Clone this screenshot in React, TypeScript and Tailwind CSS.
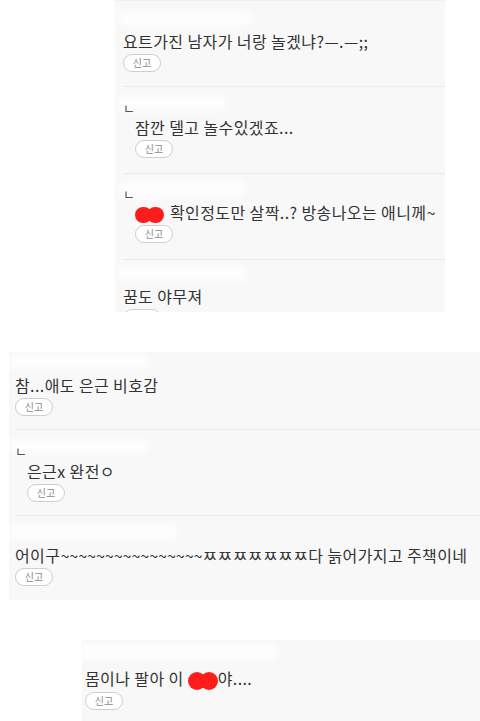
import React from "react";

interface Comment {
  text: React.ReactNode;
  reply?: boolean;
  nick: number;
  pt: string;
  gap: string;
  pb: string;
}

const Censor = ({ big }: { big?: boolean }) => (
  <span className="inline-flex items-center align-middle mr-[6px]">
    <span className={big ? "w-[18px] h-[18px] rounded-full bg-[#ff1c1c]" : "w-[17px] h-[16px] rounded-full bg-[#ff1c1c]"} />
    <span className={big ? "w-[18px] h-[18px] rounded-full bg-[#ff1c1c] -ml-[6px]" : "w-[17px] h-[16px] rounded-full bg-[#ff1c1c] -ml-[5px]"} />
  </span>
);

const ReportButton = () => (
  <div className="h-[18px] w-[38px] rounded-full border border-[#cfcfcf] bg-white flex items-center justify-center text-[10px] text-[#8a8a8a] leading-none">
    신고
  </div>
);

const CommentRow = ({ c, last }: { c: Comment; last?: boolean }) => (
  <div className={`${c.pt} ${c.pb} ${last ? "" : "border-b border-[#ececec]"}`}>
    <div className="relative h-[16px] flex items-end">
      <div
        className="absolute top-0 left-[-6px] h-[16px] rounded-full bg-white/80 blur-[3px]"
        style={{ width: c.nick }}
      />
      {c.reply && <span className="relative text-[13px] leading-none text-[#555] translate-y-[3px]">ㄴ</span>}
    </div>
    <div className={c.reply ? "pl-[12px]" : ""}>
      <p className={`${c.gap} text-[16px] leading-[22px] tracking-[0.4px] text-[#333] whitespace-nowrap`}>{c.text}</p>
      <div className="mt-[2px]">
        <ReportButton />
      </div>
    </div>
  </div>
);

const block1: Comment[] = [
  { text: "요트가진 남자가 너랑 놀겠냐?—.—;;", nick: 135, pt: "pt-[10px]", gap: "mt-[3px]", pb: "pb-[14px]" },
  { text: "잠깐 델고 놀수있겠죠...", reply: true, nick: 110, pt: "pt-[8px]", gap: "mt-[5px]", pb: "pb-[15px]" },
  {
    text: (
      <>
        <Censor />
        확인정도만 살짝..? 방송나오는 애니께~
      </>
    ),
    reply: true,
    nick: 130,
    pt: "pt-[7px]",
    gap: "mt-[4px]",
    pb: "pb-[16px]",
  },
  { text: "꿈도 야무져", nick: 130, pt: "pt-[6px]", gap: "mt-[3px]", pb: "pb-[16px]" },
];

const block2: Comment[] = [
  { text: "참...애도 은근 비호감", nick: 140, pt: "pt-[2px]", gap: "mt-[4px]", pb: "pb-[13px]" },
  { text: "은근x 완전ㅇ", reply: true, nick: 140, pt: "pt-[8px]", gap: "mt-[6px]", pb: "pb-[13px]" },
  {
    text: (
      <>
        어이구<span className="tracking-normal">~~~~~~~~~~~~~~~~</span>ㅉㅉㅉㅉㅉㅉㅉ다 늙어가지고 주책이네
      </>
    ),
    nick: 170,
    pt: "pt-[8px]",
    gap: "mt-[4px]",
    pb: "pb-[13px]",
  },
];

const block3: Comment[] = [
  {
    text: (
      <>
        몸이나 팔아 이 <Censor big />
        <span className="-ml-[6px]">야....</span>
      </>
    ),
    nick: 200,
    pt: "pt-[4px]",
    gap: "mt-[7px]",
    pb: "pb-[10px]",
  },
];

export default function App() {
  return (
    <div
      className="w-[480px] h-[721px] bg-white overflow-hidden"
      style={{ fontFamily: '"Noto Sans CJK KR", "Noto Sans", sans-serif' }}
    >
      <div className="ml-[115px] w-[330px] h-[312px] overflow-hidden bg-[#f8f8f8] pl-[8px] border-t border-[#f0f0f0]">
        {block1.map((c, i) => (
          <CommentRow key={i} c={c} last={i === block1.length - 1} />
        ))}
      </div>

      <div className="mt-[40px] ml-[9px] h-[248px] overflow-hidden bg-[#f8f8f8] pl-[6px]">
        {block2.map((c, i) => (
          <CommentRow key={i} c={c} last={i === block2.length - 1} />
        ))}
      </div>

      <div className="mt-[40px] ml-[82px] h-[81px] overflow-hidden bg-[#f8f8f8] pl-[3px]">
        {block3.map((c, i) => (
          <CommentRow key={i} c={c} last />
        ))}
      </div>
    </div>
  );
}
